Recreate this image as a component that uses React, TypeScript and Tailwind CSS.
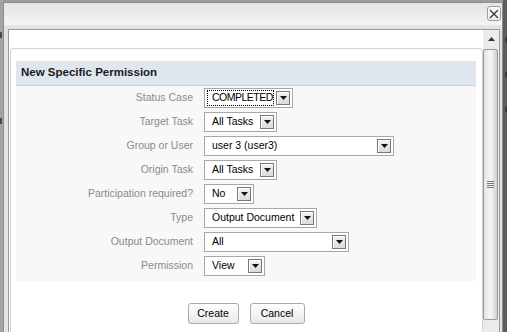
const font = { fontFamily: '"Liberation Sans", Arial, sans-serif' };

const rows = [
  { label: "Status Case", value: "COMPLETED", w: "w-[89px]", focus: true },
  { label: "Target Task", value: "All Tasks", w: "w-[73px]" },
  { label: "Group or User", value: "user 3 (user3)", w: "w-[190px]" },
  { label: "Origin Task", value: "All Tasks", w: "w-[73px]" },
  { label: "Participation required?", value: "No", w: "w-[50px]" },
  { label: "Type", value: "Output Document", w: "w-[113px]" },
  { label: "Output Document", value: "All", w: "w-[145px]" },
  { label: "Permission", value: "View", w: "w-[61px]" },
];

const Arrow = () => (
  <div className="mr-[2px] flex h-[14px] w-[14px] shrink-0 items-center justify-center border border-[#767676] bg-gradient-to-b from-[#f2f2f2] to-[#dadada] shadow-[inset_1px_1px_0_#ffffff]">
    <svg width="7" height="4" viewBox="0 0 7 4">
      <path d="M0 0h7L3.5 4z" fill="#111" />
    </svg>
  </div>
);

const Select = ({ value, w, focus }: { value: string; w: string; focus?: boolean }) => (
  <div className={`flex h-[20px] items-center border border-[#a8a8a8] bg-white ${w}`}>
    {focus ? (
      <div className="ml-[2px] mr-[2px] flex h-[16px] flex-1 items-center border border-dotted border-black pl-[4px] text-[10.5px] tracking-[-0.5px] text-black">
        {value}
      </div>
    ) : (
      <div className="flex-1 pl-[7px] text-[10.5px] text-black">{value}</div>
    )}
    <Arrow />
  </div>
);

const Btn = ({ children, w }: { children: string; w: string }) => (
  <button className={`h-[21px] rounded-[3px] border border-[#a9a9a9] bg-gradient-to-b from-white to-[#e9e9e9] text-[10.5px] text-black ${w}`}>
    {children}
  </button>
);

export default function App() {
  return (
    <div className="relative flex h-[332px] w-[507px] overflow-hidden bg-[#9c9c9c]" style={font}>
      {/* page behind the dialog */}
      <div className="relative h-full w-[3px] bg-[#a3a3a3]">
        <div className="absolute left-0 top-[32px] h-[6px] w-[2px] bg-[#3d4a6b]" />
        <div className="absolute left-0 top-[118px] h-[6px] w-[2px] bg-[#3d4a6b]" />
      </div>

      <div className="mt-[2px] flex h-[330px] w-[500px] flex-col border-l border-r border-t border-[#8d8d8d] bg-[#e3e3e3]">
        {/* title bar */}
        <div className="flex h-[22px] shrink-0 items-start justify-end bg-gradient-to-b from-[#e4e4e4] to-[#f4f4f4] pr-[1px] pt-[3px]">
          <div className="flex h-[15px] w-[14px] items-center justify-center rounded-[3px] border border-[#9c9c9c] bg-gradient-to-b from-white to-[#ececec]">
            <svg width="10" height="10" viewBox="0 0 10 10">
              <path d="M1 1l8 8M9 1l-8 8" stroke="#3a3a3a" strokeWidth="1.3" />
            </svg>
          </div>
        </div>
        <div className="h-[4px] shrink-0 bg-[#e3e3e3]" />

        {/* iframe */}
        <div className="ml-[4px] mr-[2px] flex flex-1 border-l border-t border-r border-[#9a9a9a] bg-white">
          <div className="flex-1 pl-[1px] pt-[18px]">
            <div className="h-full rounded-t-[4px] border-l border-r border-t border-[#d2d2d2] pl-[5px] pr-[6px] pt-[12px]">
              <div className="flex h-[25px] items-center border-b border-[#c9d2de] bg-[#e0e6ee] pl-[5px] text-[11.5px] font-bold text-[#1a1a1a]">
                New Specific Permission
              </div>
              <div className="bg-[#f8f8f8] pb-[1px] pt-[2px]">
                {rows.map((r) => (
                  <div key={r.label} className="flex h-[24px] items-start">
                    <div className="flex h-[20px] w-[177px] items-center justify-end text-[10.5px] text-[#8a8a8a]">
                      {r.label}
                    </div>
                    <div className="ml-[11px]">
                      <Select value={r.value} w={r.w} focus={r.focus} />
                    </div>
                  </div>
                ))}
              </div>
              <div className="flex justify-center gap-[11px] pt-[22px]">
                <Btn w="w-[51px]">Create</Btn>
                <Btn w="w-[55px]">Cancel</Btn>
              </div>
            </div>
          </div>

          {/* scrollbar */}
          <div className="flex w-[16px] shrink-0 flex-col bg-[#ebebeb]">
            <div className="flex h-[17px] items-center justify-center">
              <svg width="7" height="4" viewBox="0 0 7 4">
                <path d="M3.5 0L7 4H0z" fill="#333" />
              </svg>
            </div>
            <div className="mt-[2px] flex h-[271px] w-[15px] items-center justify-center rounded-[2px] border border-[#9a9a9a] bg-gradient-to-r from-[#e2e2e2] via-[#f7f7f7] to-[#cfcfcf]">
              <div className="flex flex-col gap-[1px]">
                <div className="h-[1px] w-[7px] bg-[#777]" />
                <div className="h-[1px] w-[7px] bg-[#777]" />
                <div className="h-[1px] w-[7px] bg-[#777]" />
                <div className="h-[1px] w-[7px] bg-[#777]" />
              </div>
            </div>
          </div>
        </div>
      </div>

      <div className="relative h-full flex-1 bg-[#5c5c5c]">
        <div className="absolute right-0 top-[37px] h-[5px] w-[2px] bg-[#2d3a66]" />
        <div className="absolute right-0 top-[72px] h-[5px] w-[2px] bg-[#2d3a66]" />
        <div className="absolute right-0 top-[107px] h-[5px] w-[2px] bg-[#2d3a66]" />
      </div>
    </div>
  );
}
